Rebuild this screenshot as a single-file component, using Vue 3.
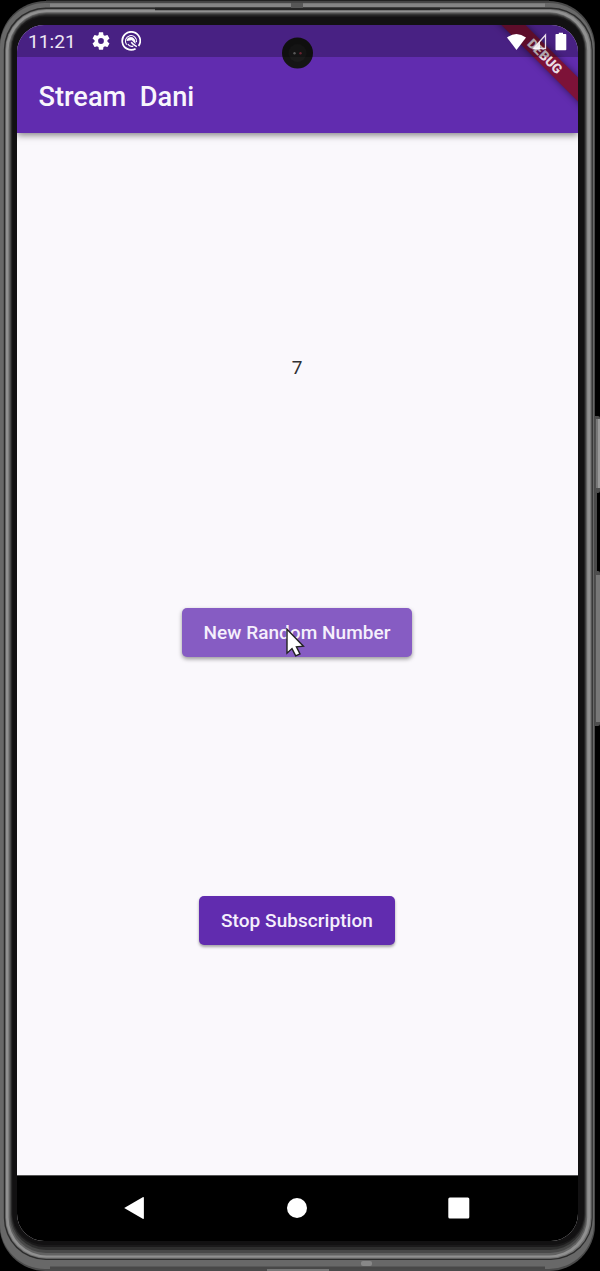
<script setup>
// Nested outlines of the handset bezel: left, top, right, bottom, radius, colour
const frame = [
  [-0.5, 1, 595, 1271, 46, '#4a4a4a'],
  [0, 3, 594, 1269, 45, '#686868'],
  [3.8, 7.5, 592.8, 1260, 42, '#2c2c2c'],
  [5.2, 9, 591.6, 1258.7, 41, '#727272'],
  [6, 10, 590.3, 1257.5, 40, '#909090'],
  [8.6, 12.3, 587.2, 1255.5, 38, '#626262'],
  [10, 13.3, 586, 1253, 36, '#484848'],
  [11, 14.3, 585.3, 1250, 35, '#2e2e2e'],
  [11.8, 15.5, 584.6, 1247, 33, '#1b1a1b'],
  [12.5, 17, 584, 1245, 32, '#121112']
]
</script>

<template>
  <div class="stage">
    <svg class="shell" viewBox="0 0 600 1271" aria-hidden="true">
      <rect x="592" y="416" width="8" height="77" rx="2" fill="#4e4e4e" />
      <rect x="596" y="419" width="2" height="69" fill="#777" />
      <rect x="598" y="419" width="2" height="69" fill="#999" />
      <rect x="592" y="492" width="5" height="80" fill="#4a4a4a" />
      <rect x="592" y="571" width="8" height="155" rx="2" fill="#4e4e4e" />
      <rect x="596" y="575" width="4" height="147" fill="#777" />
      <rect v-for="(f, i) in frame" :key="i" :x="f[0]" :y="f[1]" :width="f[2] - f[0]" :height="f[3] - f[1]" :rx="f[4]" :fill="f[5]" />
      <path d="M46 1.5H549" stroke="#444" stroke-width="2" />
      <path d="M50 5.3H545" stroke="#858585" stroke-width="3.6" />
      <path d="M155 9H440" stroke="#262626" stroke-width="2.4" />
      <rect x="291" y="3" width="12" height="5" fill="#575757" />
      <path d="M50 1267.8H545" stroke="#484848" stroke-width="2.4" />
      <rect x="267" y="1269" width="62" height="2" fill="#777" />
      <rect x="361" y="1261" width="11" height="5" rx="2" fill="#888" />
    </svg>

    <div class="screen">
      <header class="top">
        <div class="status">
          <span class="time">11:21</span>
          <svg class="gear" viewBox="2 2 20 20"><path fill="#fff" d="M19.14 12.94c.04-.3.06-.61.06-.94 0-.32-.02-.64-.07-.94l2.03-1.58c.18-.14.23-.41.12-.61l-1.92-3.32c-.12-.22-.37-.29-.59-.22l-2.39.96c-.5-.38-1.03-.7-1.62-.94l-.36-2.54c-.04-.24-.24-.41-.48-.41h-3.84c-.24 0-.43.17-.47.41l-.36 2.54c-.59.24-1.13.57-1.62.94l-2.39-.96c-.22-.08-.47 0-.59.22L2.74 8.87c-.12.21-.08.47.12.61l2.03 1.58c-.05.3-.09.63-.09.94s.02.64.07.94l-2.03 1.58c-.18.14-.23.41-.12.61l1.92 3.32c.12.22.37.29.59.22l2.39-.96c.5.38 1.03.7 1.62.94l.36 2.54c.05.24.24.41.48.41h3.84c.24 0 .44-.17.47-.41l.36-2.54c.59-.24 1.13-.56 1.62-.94l2.39.96c.22.08.47 0 .59-.22l1.92-3.32c.12-.22.07-.47-.12-.61l-2.01-1.58zM12 15.2a3.2 3.2 0 1 1 0-6.4 3.2 3.2 0 0 1 0 6.4z" /></svg>
          <svg class="swirl" viewBox="0 0 20 20" fill="none" stroke="#fff">
            <path d="M14.6 17.7A9 9 0 1 1 17.6 15" stroke-width="1.7" />
            <path d="M5.6 13.6A5.6 5.6 0 1 1 15.5 11.2" stroke-width="1.1" />
            <path d="M6 8.2C7.6 5.7 11 5.4 13 7.4c1.4 1.5 1.8 3.4 1.5 5.6L10.8 9.3 5.6 10z" fill="#fff" stroke="none" />
            <path d="M10.2 11.2c1.2 1.5 3 3.2 5.6 4.4" stroke-width="1.5" />
            <path d="M6.8 13.2c1.3 1.8 3.4 2.5 5.4 1.9" stroke-width="1.2" />
          </svg>
        </div>
        <h1 class="title">Stream&nbsp; Dani</h1>
      </header>

      <main class="body">
        <span class="number">7</span>
        <div class="target"><button class="btn pressed">New Random Number</button></div>
        <div class="target"><button class="btn">Stop Subscription</button></div>
      </main>

      <nav class="nav">
        <svg viewBox="0 0 24 24"><path d="M1.2 12 19.7 1.2q1.2-.5 1.2.8v20q0 1.3-1.2.8z" fill="#fff" /></svg>
        <svg viewBox="0 0 24 24"><circle cx="12" cy="12" r="10" fill="#fff" /></svg>
        <svg viewBox="0 0 24 24"><rect x="1.3" y="1.5" width="21" height="21" rx="1.5" fill="#fff" /></svg>
      </nav>

      <div class="corner">
        <div class="ribbon">DEBUG</div>
      </div>
      <svg class="signals" viewBox="0 0 64 22">
        <path d="M1 5.5Q10.5-1.5 20 5.5L10.5 18z" fill="#fff" />
        <path d="M27.5 16.5 39.5 3v13.5z" fill="none" stroke="#e9dce9" stroke-width="1.3" />
        <path d="M27 17.2 34 9.5v7.7z" fill="#fff" opacity=".85" />
        <path d="M50.3 2h2.5V.7h4.2V2h2.5q.8 0 .8.8v14.7q0 .8-.8.8h-9.2q-.8 0-.8-.8V2.8q0-.8.8-.8z" fill="#fff" />
      </svg>
    </div>

    <svg class="camera" viewBox="0 0 32 32">
      <circle cx="16.5" cy="16" r="15.5" fill="#151515" />
      <circle cx="16.5" cy="16" r="9" fill="#1b1b1b" />
      <circle cx="13.5" cy="16.3" r="1.2" fill="#777" />
      <circle cx="19.5" cy="16.3" r="1.2" fill="#8c2f40" />
    </svg>
    <svg class="cursor" viewBox="0 0 19 29">
      <path d="M1 1.2v24l5-4.6 3.7 7.3 4.3-1.9-3.6-7.2 7-.6z" fill="#fff" stroke="#222" stroke-width="1.4" />
    </svg>
  </div>
</template>

<style>
body { background: #000; }
</style>

<style scoped>
.stage {
  position: relative;
  box-sizing: border-box;
  width: 600px;
  height: 1271px;
  padding: 25px 22px 30px 17px;
  overflow: hidden;
  background: #000;
  font-family: Roboto, sans-serif;
}
.shell { position: absolute; inset: 0; width: 600px; height: 1271px; }
.screen {
  position: relative;
  display: flex;
  flex-direction: column;
  width: 561px;
  height: 1216px;
  border-radius: 27px;
  overflow: hidden;
  background: #faf8fc;
}
.top {
  position: relative;
  flex: none;
  height: 108.4px;
  background: #612caf;
  box-shadow: 0 2px 7px rgba(0, 0, 0, .5);
}
.status {
  position: relative;
  z-index: 2;
  display: flex;
  align-items: center;
  box-sizing: border-box;
  height: 32px;
  padding-left: 11px;
  background: rgba(0, 0, 0, .25);
}
.time { width: 64px; padding-top: 2px; font-size: 19.2px; line-height: 32px; color: #eee7f5; }
.gear { width: 18px; height: 18px; }
.swirl { width: 20px; height: 20px; margin-left: 10.5px; }
.title {
  margin: 0;
  padding-left: 21.5px;
  font-size: 27.2px;
  font-weight: 500;
  line-height: 80px;
  color: #f8f5fc;
}
.body {
  flex: 1;
  display: flex;
  flex-direction: column;
  justify-content: space-evenly;
  align-items: center;
  padding-right: 1px;
}
.number { padding-top: 1px; font-size: 19px; line-height: 21px; color: #303032; }
.target { display: flex; align-items: center; height: 65px; }
.btn {
  display: block;
  height: 49px;
  padding: 0 21.8px;
  border: 0;
  border-radius: 5px;
  background: #612caf;
  box-shadow: 0 2px 3px rgba(0, 0, 0, .35);
  color: #f5effc;
  font: 500 19px/49px Roboto, sans-serif;
  letter-spacing: .05px;
  white-space: nowrap;
}
.pressed { background: #865cc3; box-shadow: 0 2px 4px rgba(0, 0, 0, .4); }
.nav {
  flex: 0 0 66px;
  display: flex;
  align-items: center;
  justify-content: center;
  gap: 138px;
  box-sizing: border-box;
  padding: 0 2px 2px 0;
  border-top: 1px solid #555;
  background: #000;
}
.nav svg { width: 24px; height: 24px; }
.corner { position: absolute; z-index: 1; top: 0; right: 0; width: 90px; height: 90px; overflow: hidden; }
.ribbon {
  position: absolute;
  top: 22.5px;
  left: -13px;
  width: 140px;
  height: 16.5px;
  transform: rotate(45deg);
  background: #7d1238;
  box-shadow: 0 0 7px rgba(0, 0, 0, .5);
  color: #eadce5;
  text-align: center;
  font-size: 13.4px;
  font-weight: 900;
  line-height: 17px;
}
.signals { position: absolute; z-index: 3; left: 489px; top: 6.5px; width: 64px; height: 22px; }
.camera { position: absolute; left: 281px; top: 37px; width: 32px; height: 32px; }
.cursor { position: absolute; left: 286px; top: 628px; width: 19px; height: 29px; }
</style>
